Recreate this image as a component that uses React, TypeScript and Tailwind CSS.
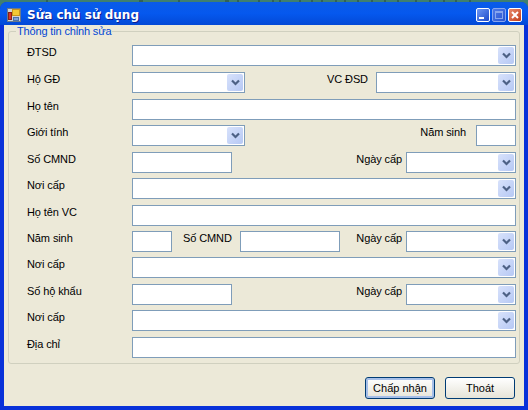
const font = "font-['Liberation_Sans',Arial,sans-serif]";

function Chevron() {
  return (
    <svg width="9" height="7" viewBox="0 0 9 7" className="block">
      <path d="M1 1.5 L4.5 5 L8 1.5" fill="none" stroke="#4d6185" strokeWidth="2.2" />
    </svg>
  );
}

function Combo({ className }: { className: string }) {
  return (
    <div className={`h-[21px] border border-[#7f9db9] bg-white flex justify-end items-stretch p-px ${className}`}>
      <div className="w-[16px] rounded-[2px] bg-gradient-to-br from-[#d8e2fb] to-[#b6c8f4] flex items-center justify-center">
        <Chevron />
      </div>
    </div>
  );
}

function Input({ className }: { className: string }) {
  return <div className={`h-[21px] border border-[#7f9db9] bg-white ${className}`} />;
}

function Label({ children, className = "" }: { children: string; className?: string }) {
  return <span className={`text-[11px] leading-[13px] tracking-[-0.1px] text-black whitespace-nowrap -mt-[6px] ${className}`}>{children}</span>;
}

function Row({ children, className = "" }: { children: React.ReactNode; className?: string }) {
  return <div className={`flex items-center h-[21px] pl-[18px] pr-[3px] ${className}`}>{children}</div>;
}

function Lead({ children }: { children: string }) {
  return <Label className="w-[105px] shrink-0">{children}</Label>;
}

export default function App() {
  return (
    <div className={`relative w-[528px] h-[410px] overflow-hidden bg-[#3f7f70] pt-[2px] ${font}`}>
      <svg width="528" height="2" viewBox="0 0 528 2" className="absolute left-0 top-0">
        <path d="M47 0v2M140 0v2M142 0v2M179 0v2M226 0v2M228 0v2M238 0v2M259 0v2M273 0v2M280 0v2M300 0v2M312 0v2M322 0v2M336 0v2M345 0v2M358 0v2M372 0v2M385 0v2M398 0v2M416 0v2M430 0v2M444 0v2M456 0v2M470 0v2" stroke="#26443c" strokeWidth="1" />
      </svg>
      <div className="h-[408px] rounded-t-[7px] bg-[#0831d9] flex flex-col overflow-hidden">
        <div className="h-[23px] shrink-0 bg-gradient-to-b from-[#0a5be8] via-[#0558ee] to-[#0349d6] flex items-center pt-[3px] pl-[7px] pr-[6px]">
          <svg width="14" height="14" viewBox="0 0 14 14" className="shrink-0">
            <rect x="0.5" y="0.5" width="13" height="13" fill="#cfd3d6" stroke="#6a7a8c" />
            <rect x="5.5" y="1.5" width="7" height="6" fill="#f3c935" stroke="#c8951c" />
            <rect x="1.5" y="4.5" width="3" height="7" fill="#d8342a" stroke="#8a2018" />
            <rect x="6.5" y="9.5" width="5" height="3" fill="#7ea2d8" stroke="#4c70a8" />
          </svg>
          <span className="ml-[6px] text-[12px] font-bold font-['DejaVu_Sans',sans-serif] text-white [text-shadow:1px_1px_0_#0f1f8f] whitespace-nowrap">Sửa chủ sử dụng</span>
          <div className="ml-auto flex gap-[2px]">
            <div className="w-[14px] h-[14px] rounded-[2px] border border-white bg-gradient-to-br from-[#6f97f4] to-[#1f49c8] flex items-end pl-[2px] pb-[2px]">
              <div className="w-[5px] h-[2px] bg-white" />
            </div>
            <div className="w-[14px] h-[14px] rounded-[2px] border border-[#88a6ee] bg-gradient-to-br from-[#4f7ae8] to-[#2a55d0] flex items-center justify-center">
              <div className="w-[8px] h-[8px] border border-[#88a6ee] border-t-2" />
            </div>
            <div className="w-[14px] h-[14px] rounded-[2px] border border-white bg-gradient-to-br from-[#e88a6c] to-[#c23a12] flex items-center justify-center">
              <svg width="8" height="8" viewBox="0 0 8 8"><path d="M1 1 L7 7 M7 1 L1 7" stroke="#fff" strokeWidth="2" /></svg>
            </div>
          </div>
        </div>
        <div className="mx-[4px] mb-[4px] flex-1 bg-[#ece9d8] pt-[6px] px-[4px] relative">
          <div className="h-[333px] rounded-[3px] border border-[#d0d0bf] pt-[13px]">
            <span className="absolute left-[12px] top-0 bg-[#ece9d8] text-[11px] leading-[13px] tracking-[-0.15px] text-[#0046d5] px-px whitespace-nowrap">Thông tin chỉnh sửa</span>
            <div className="flex flex-col">
              <Row><Lead>ĐTSD</Lead><Combo className="flex-1" /></Row>
              <Row className="mt-[6px]"><Lead>Hộ GĐ</Lead><Combo className="w-[113px]" /><Label className="ml-[82px]">VC ĐSD</Label><Combo className="ml-auto w-[140px]" /></Row>
              <Row className="mt-[6px]"><Lead>Họ tên</Lead><Input className="flex-1" /></Row>
              <Row className="mt-[5px]"><Lead>Giới tính</Lead><Combo className="w-[113px]" /><Label className="ml-auto mr-[10px]">Năm sinh</Label><Input className="w-[40px]" /></Row>
              <Row className="mt-[6px]"><Lead>Số CMND</Lead><Input className="w-[100px]" /><Label className="ml-auto mr-[4px]">Ngày cấp</Label><Combo className="w-[110px]" /></Row>
              <Row className="mt-[5px]"><Lead>Nơi cấp</Lead><Combo className="flex-1" /></Row>
              <Row className="mt-[6px]"><Lead>Họ tên VC</Lead><Input className="flex-1" /></Row>
              <Row className="mt-[5px]"><Lead>Năm sinh</Lead><Input className="w-[40px]" /><Label className="ml-[11px] w-[57px]">Số CMND</Label><Input className="w-[100px]" /><Label className="ml-auto mr-[4px]">Ngày cấp</Label><Combo className="w-[110px]" /></Row>
              <Row className="mt-[5px]"><Lead>Nơi cấp</Lead><Combo className="flex-1" /></Row>
              <Row className="mt-[6px]"><Lead>Số hộ khẩu</Lead><Input className="w-[100px]" /><Label className="ml-auto mr-[4px]">Ngày cấp</Label><Combo className="w-[110px]" /></Row>
              <Row className="mt-[5px]"><Lead>Nơi cấp</Lead><Combo className="flex-1" /></Row>
              <Row className="mt-[6px]"><Lead>Địa chỉ</Lead><Input className="flex-1" /></Row>
            </div>
          </div>
          <div className="flex justify-end gap-[10px] mt-[13px] pr-[5px]">
            <button className="w-[70px] h-[22px] rounded-[3px] border border-[#003c74] bg-gradient-to-b from-white to-[#e6e4d8] shadow-[inset_0_0_0_2px_#a6bfe8] text-[11px] text-black">Chấp nhận</button>
            <button className="w-[70px] h-[22px] rounded-[3px] border border-[#003c74] bg-gradient-to-b from-white to-[#e6e4d8] text-[11px] text-black">Thoát</button>
          </div>
        </div>
      </div>
    </div>
  );
}
